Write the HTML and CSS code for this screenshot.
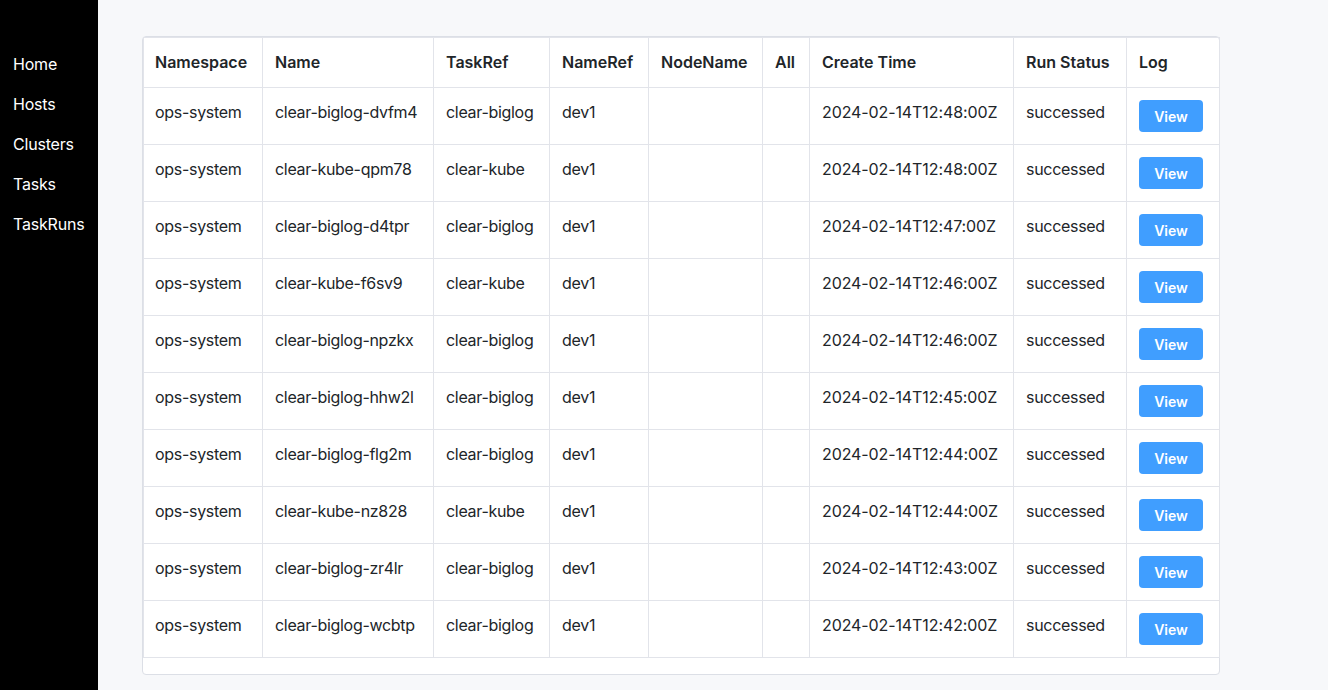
FILE: index.html
```html
<!DOCTYPE html>
<html>
<head>
<meta charset="utf-8">
<link rel="stylesheet" href="styles.css">
</head>
<body>
<div class="app">
  <nav class="sidebar">
    <a class="nav-item">Home</a>
    <a class="nav-item">Hosts</a>
    <a class="nav-item">Clusters</a>
    <a class="nav-item">Tasks</a>
    <a class="nav-item">TaskRuns</a>
  </nav>
  <main class="main">
    <div class="card">
      <table class="runs">
        <colgroup>
          <col class="c1"><col class="c2"><col class="c3"><col class="c4"><col class="c5"><col class="c6"><col class="c7"><col class="c8"><col class="c9">
        </colgroup>
        <thead>
          <tr><th>Namespace</th><th>Name</th><th>TaskRef</th><th>NameRef</th><th>NodeName</th><th>All</th><th>Create Time</th><th>Run Status</th><th>Log</th></tr>
        </thead>
        <tbody>
          <tr><td>ops-system</td><td>clear-biglog-dvfm4</td><td>clear-biglog</td><td>dev1</td><td></td><td></td><td class="time">2024-02-14T12:48:00Z</td><td>successed</td><td><button class="btn">View</button></td></tr>
          <tr><td>ops-system</td><td>clear-kube-qpm78</td><td>clear-kube</td><td>dev1</td><td></td><td></td><td class="time">2024-02-14T12:48:00Z</td><td>successed</td><td><button class="btn">View</button></td></tr>
          <tr><td>ops-system</td><td>clear-biglog-d4tpr</td><td>clear-biglog</td><td>dev1</td><td></td><td></td><td class="time">2024-02-14T12:47:00Z</td><td>successed</td><td><button class="btn">View</button></td></tr>
          <tr><td>ops-system</td><td>clear-kube-f6sv9</td><td>clear-kube</td><td>dev1</td><td></td><td></td><td class="time">2024-02-14T12:46:00Z</td><td>successed</td><td><button class="btn">View</button></td></tr>
          <tr><td>ops-system</td><td>clear-biglog-npzkx</td><td>clear-biglog</td><td>dev1</td><td></td><td></td><td class="time">2024-02-14T12:46:00Z</td><td>successed</td><td><button class="btn">View</button></td></tr>
          <tr><td>ops-system</td><td>clear-biglog-hhw2l</td><td>clear-biglog</td><td>dev1</td><td></td><td></td><td class="time">2024-02-14T12:45:00Z</td><td>successed</td><td><button class="btn">View</button></td></tr>
          <tr><td>ops-system</td><td>clear-biglog-flg2m</td><td>clear-biglog</td><td>dev1</td><td></td><td></td><td class="time">2024-02-14T12:44:00Z</td><td>successed</td><td><button class="btn">View</button></td></tr>
          <tr><td>ops-system</td><td>clear-kube-nz828</td><td>clear-kube</td><td>dev1</td><td></td><td></td><td class="time">2024-02-14T12:44:00Z</td><td>successed</td><td><button class="btn">View</button></td></tr>
          <tr><td>ops-system</td><td>clear-biglog-zr4lr</td><td>clear-biglog</td><td>dev1</td><td></td><td></td><td class="time">2024-02-14T12:43:00Z</td><td>successed</td><td><button class="btn">View</button></td></tr>
          <tr><td>ops-system</td><td>clear-biglog-wcbtp</td><td>clear-biglog</td><td>dev1</td><td></td><td></td><td class="time">2024-02-14T12:42:00Z</td><td>successed</td><td><button class="btn">View</button></td></tr>
        </tbody>
      </table>
    </div>
  </main>
</div>
</body>
</html>
```
FILE: styles.css
```css
* { box-sizing: border-box; }
html, body { margin: 0; padding: 0; height: 100%; }
body {
  font-family: Inter, "Liberation Sans", sans-serif;
  font-size: 16px;
  color: #212529;
  background: #f7f8fa;
}
.app { display: flex; min-height: 100%; }
.sidebar {
  width: 98px;
  flex: none;
  background: #000;
  padding-top: 44px;
  display: flex;
  flex-direction: column;
}
.nav-item {
  color: #fff;
  padding: 0 13px;
  height: 40px;
  line-height: 40px;
  font-size: 16px;
  letter-spacing: -0.2px;
}
.main {
  flex: 1;
  padding: 36px 0 0 44px;
}
.card {
  width: 1078px;
  background: #fff;
  border: 1px solid #dcdfe6;
  border-radius: 4px;
  padding-bottom: 16px;
}
.runs {
  width: 1076px;
  border-collapse: collapse;
  table-layout: fixed;
}
.runs th, .runs td {
  border: 1px solid #e2e4ea;
  padding: 12px;
  line-height: 24px;
  text-align: left;
  vertical-align: top;
  white-space: nowrap;
}
.runs th { padding-top: 12px; padding-bottom: 13px; font-weight: 600; }
.runs tr > :first-child { padding-left: 11px; }
.runs td { letter-spacing: -0.3px; }
.runs td.time { letter-spacing: -0.1px; }
.c1 { width: 119px; }
.c2 { width: 171px; }
.c3 { width: 116px; }
.c4 { width: 99px; }
.c5 { width: 114px; }
.c6 { width: 47px; }
.c7 { width: 204px; }
.c8 { width: 113px; }
.c9 { width: 93px; }
.btn {
  display: block;
  height: 32px;
  width: 64px;
  border: none;
  border-radius: 4px;
  background: #409eff;
  color: #fff;
  font-family: Inter, "Liberation Sans", sans-serif;
  font-size: 14px;
  font-weight: 600;
  letter-spacing: 0;
  padding: 0;
}
```
